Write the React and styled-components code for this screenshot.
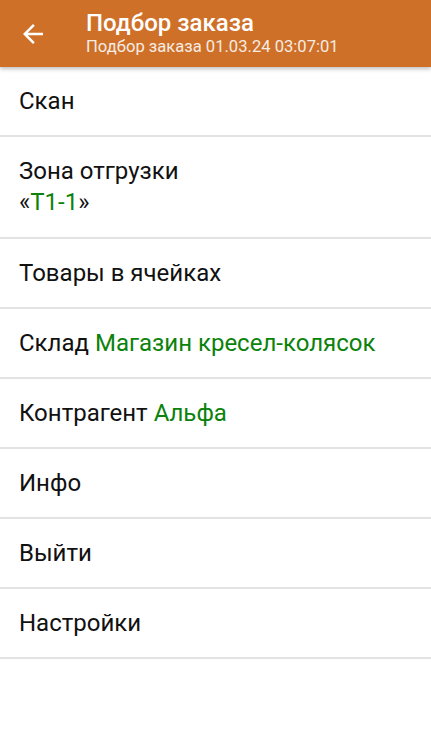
import React from "react";
import styled, { createGlobalStyle } from "styled-components";

const Global = createGlobalStyle`
  html, body { margin: 0; padding: 0; background: #fff; }
  body { font-family: Roboto, "Noto Sans", sans-serif; }
`;

const Page = styled.div`
  width: 431px;
  min-height: 739px;
  background: #fff;
`;

const Header = styled.header`
  height: 67px;
  background: #cf7028;
  display: flex;
  align-items: center;
  box-shadow: 0 2px 4px rgba(0,0,0,0.25);
  position: relative;
  z-index: 1;
`;

const BackButton = styled.div`
  width: 86px;
  display: flex;
  align-items: center;
  padding-left: 18px;
  box-sizing: border-box;
  height: 100%;
`;

const Titles = styled.div`
  display: flex;
  flex-direction: column;
  color: #fff;
`;

const Title = styled.div`
  font-size: 24px;
  font-weight: 500;
  line-height: 28px;
  margin-top: -2px;
`;

const Subtitle = styled.div`
  font-size: 16.6px;
  line-height: 20px;
  color: #f6ece4;
`;

const Row = styled.div`
  min-height: 68px;
  border-bottom: 2px solid #e3e3e3;
  padding: ${p => (p.$tall ? "18px 19px" : "0 19px")};
  display: flex;
  flex-direction: column;
  justify-content: center;
  font-size: 24px;
  line-height: 31px;
  color: #111;
  box-sizing: content-box;
  ${p => (p.$tall ? "min-height: 64px;" : "")}
`;

const Green = styled.span`
  color: #0b820b;
`;

const items = [
  { key: "scan", content: "Скан" },
  {
    key: "zone",
    tall: true,
    content: (
      <>
        <div>Зона отгрузки</div>
        <div>«<Green>Т1-1</Green>»</div>
      </>
    ),
  },
  { key: "goods", content: "Товары в ячейках" },
  { key: "wh", content: <span>Склад <Green>Магазин кресел-колясок</Green></span> },
  { key: "ctr", content: <span>Контрагент <Green>Альфа</Green></span> },
  { key: "info", content: "Инфо" },
  { key: "exit", content: "Выйти" },
  { key: "settings", content: "Настройки" },
];

export default function App() {
  return (
    <Page>
      <Global />
      <Header>
        <BackButton>
          <svg width="30" height="30" viewBox="0 0 24 24">
            <path d="M20 11H7.83l5.59-5.59L12 4l-8 8 8 8 1.41-1.41L7.83 13H20v-2z" fill="#fff" />
          </svg>
        </BackButton>
        <Titles>
          <Title>Подбор заказа</Title>
          <Subtitle>Подбор заказа 01.03.24 03:07:01</Subtitle>
        </Titles>
      </Header>
      {items.map(it => (
        <Row key={it.key} $tall={it.tall}>{it.content}</Row>
      ))}
    </Page>
  );
}
